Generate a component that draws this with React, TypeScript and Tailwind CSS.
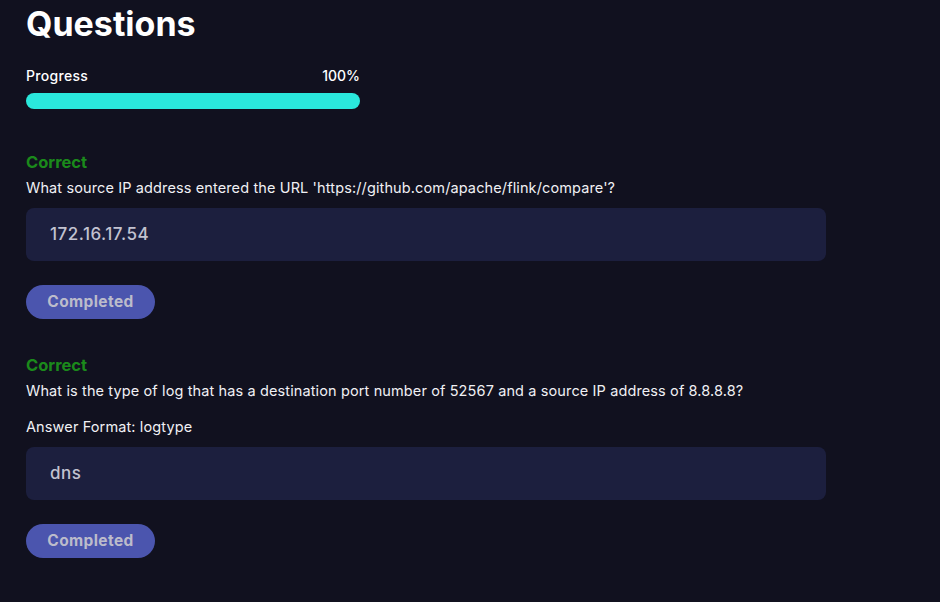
import React from 'react';

type Question = {
  id: number;
  text: string;
  format?: string;
  answer: string;
};

const questions: Question[] = [
  {
    id: 1,
    text: "What source IP address entered the URL 'https://github.com/apache/flink/compare'?",
    answer: '172.16.17.54',
  },
  {
    id: 2,
    text: 'What is the type of log that has a destination port number of 52567 and a source IP address of 8.8.8.8?',
    format: 'Answer Format: logtype',
    answer: 'dns',
  },
];

const QuestionBlock: React.FC<{ q: Question }> = ({ q }) => (
  <div className="mb-[36px]">
    <div className="h-[20px] leading-[20px] text-[16.5px] font-bold text-[#1b8a1b]">Correct</div>
    <p className="mt-[6px] h-[20px] leading-[20px] text-[14.5px] tracking-[0.12px] text-[#f0f0f4]">{q.text}</p>
    {q.format && (
      <p className="mt-[16px] h-[20px] leading-[20px] text-[14.5px] tracking-[0.12px] text-[#f0f0f4]">{q.format}</p>
    )}
    {/* 回答欄 */}
    <div className="mt-[10px] w-[800px] h-[53px] rounded-[8px] bg-[#1c1f3e] flex items-center px-[24px]">
      <span className="text-[17px] font-medium text-[#c2c2d0] tracking-[0.5px]">{q.answer}</span>
    </div>
    <button className="mt-[24px] w-[129px] h-[34px] rounded-full bg-[#4b55ae] text-[15.5px] font-bold tracking-[0.4px] text-[#bcbccb]">
      Completed
    </button>
  </div>
);

const App: React.FC = () => {
  return (
    <div
      className="min-h-[602px] w-full bg-[#11111f] px-[26px] pt-[5px]"
      style={{ fontFamily: 'Inter, "Open Sans", sans-serif' }}
    >
      <h1 className="text-[34px] leading-[38px] font-bold text-white">Questions</h1>
      <div className="w-[334px] mt-[24px]">
        <div className="flex justify-between h-[18px] leading-[18px] text-[14px] font-medium text-white">
          <span className="tracking-[0.3px]">Progress</span>
          <span>100%</span>
        </div>
        <div className="mt-[8px] h-[16px] rounded-full bg-[#2ae8dc]" />
      </div>
      <div className="mt-[43px]">
        {questions.map((q) => (
          <QuestionBlock key={q.id} q={q} />
        ))}
      </div>
    </div>
  );
};

export default App;
